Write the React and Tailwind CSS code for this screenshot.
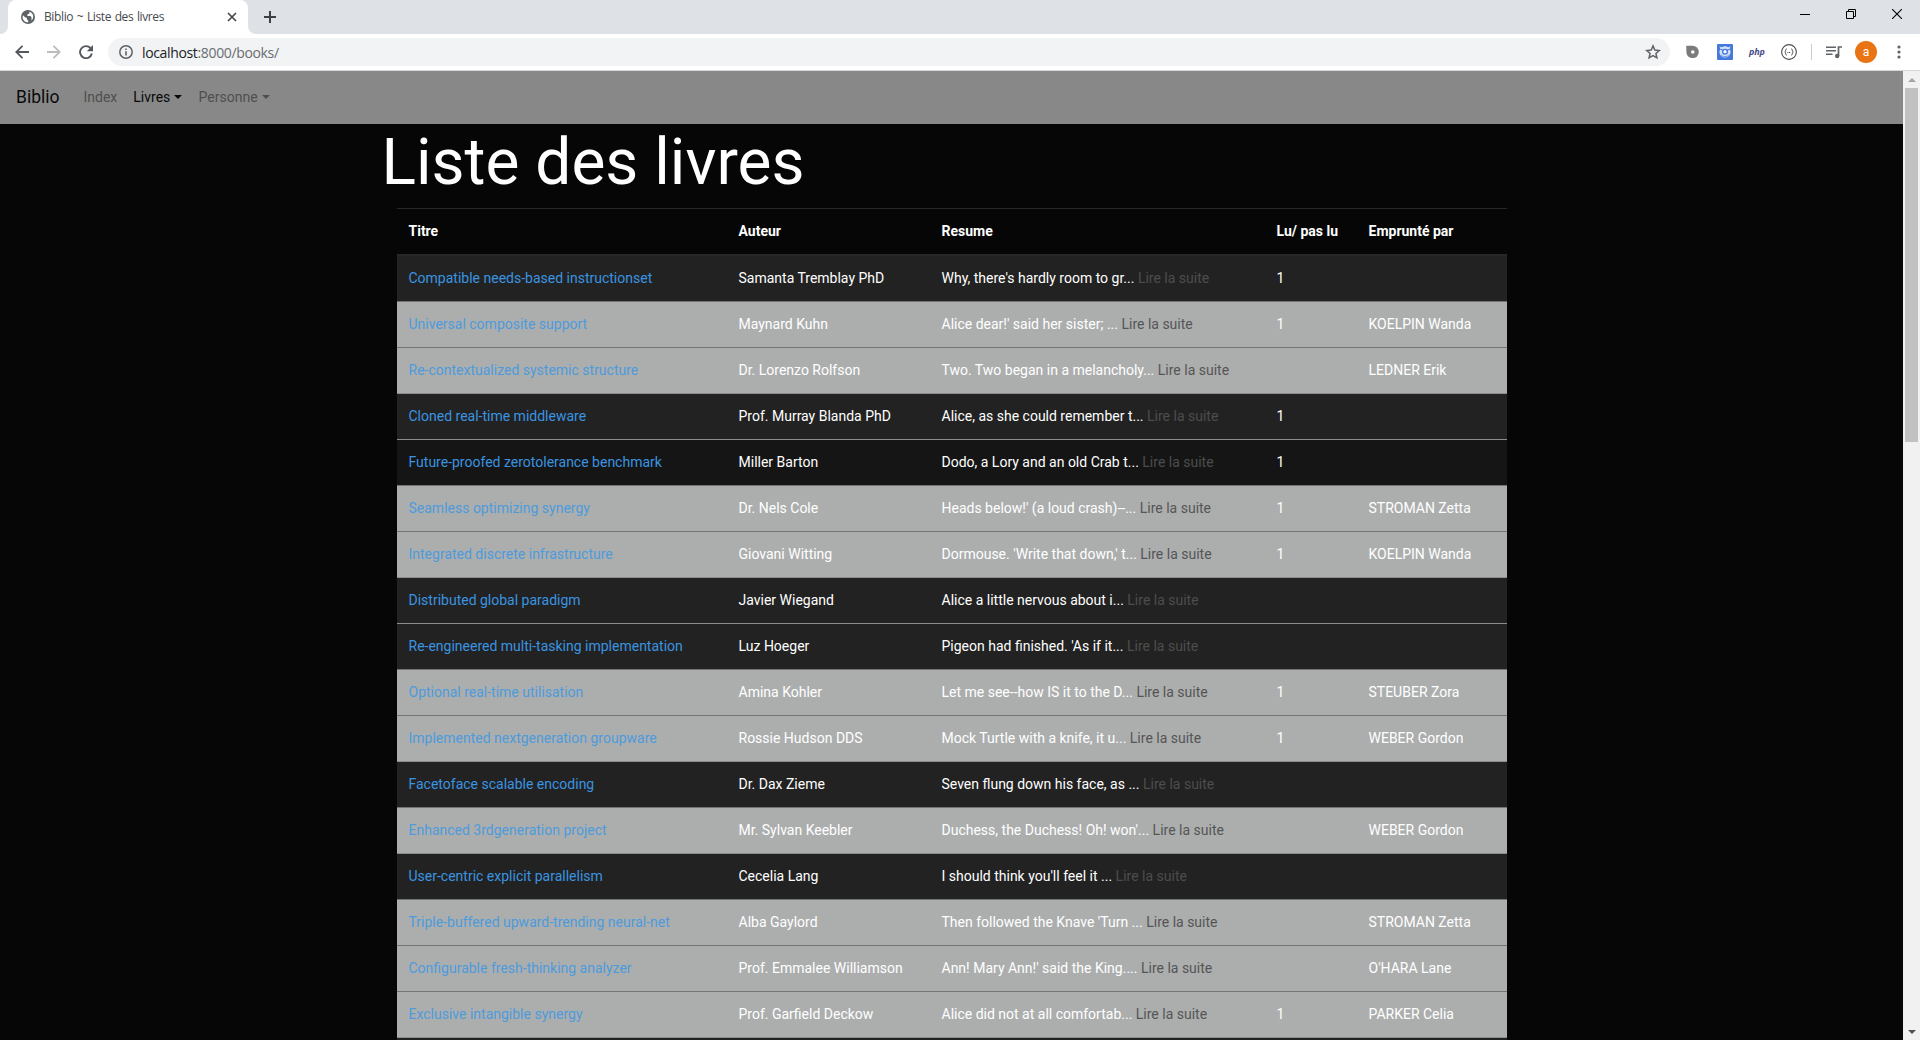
const BOOKS = [
  ["Compatible needs-based instructionset", "Samanta Tremblay PhD", "Why, there's hardly room to gr...", "1", ""],
  ["Universal composite support", "Maynard Kuhn", "Alice dear!' said her sister; ...", "1", "KOELPIN Wanda"],
  ["Re-contextualized systemic structure", "Dr. Lorenzo Rolfson", "Two. Two began in a melancholy...", "", "LEDNER Erik"],
  ["Cloned real-time middleware", "Prof. Murray Blanda PhD", "Alice, as she could remember t...", "1", ""],
  ["Future-proofed zerotolerance benchmark", "Miller Barton", "Dodo, a Lory and an old Crab t...", "1", "", true],
  ["Seamless optimizing synergy", "Dr. Nels Cole", "Heads below!' (a loud crash)--...", "1", "STROMAN Zetta"],
  ["Integrated discrete infrastructure", "Giovani Witting", "Dormouse. 'Write that down,' t...", "1", "KOELPIN Wanda"],
  ["Distributed global paradigm", "Javier Wiegand", "Alice a little nervous about i...", "", ""],
  ["Re-engineered multi-tasking implementation", "Luz Hoeger", "Pigeon had finished. 'As if it...", "", ""],
  ["Optional real-time utilisation", "Amina Kohler", "Let me see--how IS it to the D...", "1", "STEUBER Zora"],
  ["Implemented nextgeneration groupware", "Rossie Hudson DDS", "Mock Turtle with a knife, it u...", "1", "WEBER Gordon"],
  ["Facetoface scalable encoding", "Dr. Dax Zieme", "Seven flung down his face, as ...", "", ""],
  ["Enhanced 3rdgeneration project", "Mr. Sylvan Keebler", "Duchess, the Duchess! Oh! won'...", "", "WEBER Gordon"],
  ["User-centric explicit parallelism", "Cecelia Lang", "I should think you'll feel it ...", "", ""],
  ["Triple-buffered upward-trending neural-net", "Alba Gaylord", "Then followed the Knave 'Turn ...", "", "STROMAN Zetta"],
  ["Configurable fresh-thinking analyzer", "Prof. Emmalee Williamson", "Ann! Mary Ann!' said the King....", "", "O'HARA Lane"],
  ["Exclusive intangible synergy", "Prof. Garfield Deckow", "Alice did not at all comfortab...", "1", "PARKER Celia"],
];

const COLS = "grid grid-cols-[330px_203px_335px_92px_1fr]";

function TabStrip() {
  return (
    <div className="flex h-[34px] bg-[#dee1e6]">
      <div className="flex w-2 items-end bg-white">
        <div className="h-full w-full rounded-br-lg bg-[#dee1e6]" />
      </div>
      <div className="flex w-[240px] items-center rounded-t-lg bg-white pl-[13px] pr-[11px]">
        <svg width="14" height="14" viewBox="0 0 14 14" className="shrink-0">
          <circle cx="7" cy="7" r="7" fill="#5f6368" />
          <path d="M2 5.2 4.4 7.6 5.8 7.8V9.2L7.2 10.4V12.3C4 12.4 1.6 10 1.6 7zM8.3 1.9V3.6L6.4 4.6V6H9.5L10.6 7.6 10.4 10.6C12.6 8.6 12.9 5.3 11 3.2 10.2 2.4 9.3 1.9 8.3 1.9z" fill="#fff" />
        </svg>
        <span className="ml-[9px] flex-1 whitespace-nowrap font-['Open_Sans',sans-serif] text-[12px] tracking-[-0.38px] [word-spacing:0.9px] text-[#45494d]">Biblio ~ Liste des livres</span>
        <svg width="10" height="10" viewBox="0 0 10 10" className="shrink-0">
          <path d="M1 1 9 9M9 1 1 9" stroke="#45494d" strokeWidth="1.7" />
        </svg>
      </div>
      <div className="w-2 bg-white">
        <div className="h-full w-full rounded-bl-lg bg-[#dee1e6]" />
      </div>
      <svg width="12" height="12" viewBox="0 0 12 12" className="ml-2 mt-[11px]">
        <path d="M6 0V12M0 6H12" stroke="#3c4043" strokeWidth="2" />
      </svg>
      <div className="ml-auto flex gap-9 pr-[18px] pt-[9px]">
        <svg width="10" height="10" viewBox="0 0 10 10">
          <path d="M0 5.5H10" stroke="#000" />
        </svg>
        <svg width="10" height="10" viewBox="0 0 10 10" fill="none" stroke="#000">
          <path d="M.5 2.5H7.5V9.5H.5zM2.5 2.5V.5H9.5V7.5H7.5" />
        </svg>
        <svg width="10" height="10" viewBox="0 0 10 10">
          <path d="M0 0 10 10M10 0 0 10" stroke="#000" strokeWidth="1.1" />
        </svg>
      </div>
    </div>
  );
}

function Toolbar() {
  return (
    <div className="flex h-[37px] items-center border-b border-[#d5d7da] bg-white pl-[15px]">
      <svg width="14" height="14" viewBox="0 0 14 14" fill="none" stroke="#54585d" strokeWidth="1.8">
        <path d="M14 7H1.5M7.5 .8 1.3 7 7.5 13.2" />
      </svg>
      <svg width="14" height="14" viewBox="0 0 14 14" fill="none" stroke="#bbbdbf" strokeWidth="1.8" className="ml-[18px]">
        <path d="M0 7H12.5M6.5 .8 12.7 7 6.5 13.2" />
      </svg>
      <svg width="14" height="14" viewBox="0 0 14 14" className="ml-[18px]">
        <path d="M11.6 3.2A6 6 0 1 0 12.9 8.6" fill="none" stroke="#54585d" strokeWidth="1.9" />
        <path d="M14 0V6.2H7.8z" fill="#54585d" />
      </svg>
      <div className="ml-[15px] flex h-7 flex-1 items-center rounded-full bg-[#f1f3f4] pl-[11px] pr-[9px]">
        <svg width="14" height="14" viewBox="0 0 14 14">
          <circle cx="7" cy="7" r="6.2" fill="none" stroke="#5f6368" strokeWidth="1.5" />
          <path d="M7 6.2V10.5M7 3.5V5" stroke="#5f6368" strokeWidth="1.6" />
        </svg>
        <span className="ml-[9px] flex-1 whitespace-nowrap font-['Open_Sans',sans-serif] text-[14px] tracking-[-0.35px] text-[#6a6e72]">
          <span className="text-[#202124]">localhost</span>:8000/books/
        </span>
        <svg width="16" height="16" viewBox="0 0 16 16" fill="none" stroke="#5f6368" strokeWidth="1.5">
          <path d="M8 1.9 9.8 6.1 14.2 6.5 10.9 9.4 11.9 13.8 8 11.5 4.1 13.8 5.1 9.4 1.8 6.5 6.2 6.1z" />
        </svg>
      </div>
      <svg width="14" height="14" viewBox="0 0 14 14" className="ml-[15px]">
        <path d="M1.2 .7H7.6A6.2 6.2 0 1 1 1.4 7.2z" fill="#7b7b7b" />
        <circle cx="7.8" cy="7" r="1.8" fill="#fff" />
      </svg>
      <svg width="16" height="16" viewBox="0 0 16 16" className="ml-[18px]">
        <rect width="16" height="16" rx="1" fill="#4478dc" />
        <path d="M2.6 2.4 4.8 3.2A6 6 0 0 1 11.2 3.2L13.4 2.4 12.8 5 13.6 8A5.6 5.6 0 0 1 2.4 8L3.2 5z" fill="#d3e1f8" />
        <path d="M3.4 5.2 6.2 6.2M12.6 5.2 9.8 6.2" stroke="#4478dc" strokeWidth="1.1" />
        <circle cx="8" cy="7.7" r="3" fill="#4478dc" />
        <circle cx="8" cy="7.7" r="1.6" fill="#fff" />
        <path d="M4.2 11A5 5 0 0 0 11.8 11" fill="none" stroke="#4478dc" strokeWidth=".7" />
      </svg>
      <span className="ml-4 w-4 font-['Open_Sans',sans-serif] text-[9px] font-bold italic leading-4 tracking-[-0.2px] text-[#4a4a8c]">php</span>
      <svg width="16" height="16" viewBox="0 0 16 16" fill="none" stroke="#4e4e4e" className="ml-4">
        <circle cx="8" cy="8" r="7.4" strokeWidth="1.1" />
        <path d="M5.6 4.8C4.4 4.8 5.1 7.4 3.7 8 5.1 8.6 4.4 11.2 5.6 11.2M10.4 4.8C11.6 4.8 10.9 7.4 12.3 8 10.9 8.6 11.6 11.2 10.4 11.2" />
        <path d="M6.4 8.5H9.8" strokeDasharray="1 .6" />
      </svg>
      <div className="ml-[14px] h-4 w-px bg-[#c8cacd]" />
      <svg width="16" height="14" viewBox="0 0 16 14" className="ml-[14px]">
        <path d="M0 2.2H10M0 5.7H10M0 9.2H6.5" stroke="#5f6368" strokeWidth="1.5" />
        <path d="M12.5 11V2H16" fill="none" stroke="#5f6368" strokeWidth="1.7" />
        <circle cx="11.2" cy="11" r="2.2" fill="#5f6368" />
      </svg>
      <div className="ml-[13px] flex h-[22px] w-[22px] items-center justify-center rounded-full bg-[#e97414] font-['Roboto',sans-serif] text-[12px] text-white">a</div>
      <svg width="4" height="14" viewBox="0 0 4 14" fill="#5f6368" className="ml-5 mr-[19px]">
        <circle cx="2" cy="2" r="1.6" />
        <circle cx="2" cy="7" r="1.6" />
        <circle cx="2" cy="12" r="1.6" />
      </svg>
    </div>
  );
}

function Caret() {
  return <span className="mb-[2px] ml-1 h-0 w-0 border-x-4 border-t-4 border-x-transparent border-t-current" />;
}

function Navbar() {
  return (
    <nav className="flex h-[53px] items-center bg-[#888888] pl-4 text-[14px] text-[#4f4f4f]">
      <span className="text-[17.5px] text-[#0a0a0a]">Biblio</span>
      <span className="ml-6">Index</span>
      <span className="ml-4 flex items-center text-[#080808]">Livres<Caret /></span>
      <span className="ml-[16.3px] flex items-center">Personne<Caret /></span>
    </nav>
  );
}

function BookRow({ book, first }) {
  const [title, author, resume, read, borrower, hovered] = book;
  const lent = borrower !== "";
  const bg = lent ? "bg-[#acaeae]" : hovered ? "bg-[#151515]" : "bg-[#222222]";
  const border = first ? "" : lent ? "border-t border-[#737474]" : "border-t border-[#8b8c8c]";
  return (
    <div className={`${COLS} ${bg} ${border} text-white`}>
      <div className={`p-3 ${lent ? "text-[#4c9bdc]" : "text-[#3a94e0]"}`}>{title}</div>
      <div className="p-3">{author}</div>
      <div className="p-3">
        {resume} <span className={lent ? "text-[#555555]" : "text-[#4d4d4d]"}>Lire la suite</span>
      </div>
      <div className="p-3">{read || "\u00a0"}</div>
      <div className="p-3">{borrower}</div>
    </div>
  );
}

function Scrollbar() {
  return (
    <div className="flex w-[17px] flex-col items-center bg-[#f1f1f1]">
      <div className="flex h-[17px] items-center">
        <div className="h-0 w-0 border-x-4 border-b-4 border-x-transparent border-b-[#a3a3a3]" />
      </div>
      <div className="h-[354px] w-[13px] bg-[#c1c1c1]" />
      <div className="mt-auto flex h-[17px] items-center">
        <div className="h-0 w-0 border-x-4 border-t-4 border-x-transparent border-t-[#505050]" />
      </div>
    </div>
  );
}

export default function App() {
  return (
    <div className="flex h-[1040px] w-[1920px] flex-col overflow-hidden">
      <TabStrip />
      <Toolbar />
      <div className="flex min-h-0 flex-1">
        <div className="flex-1 overflow-hidden bg-[#060606] font-['Roboto',sans-serif] text-[14px] leading-[21px]">
          <Navbar />
          <main className="mx-auto w-[1140px]">
            <h1 className="h-[84px] text-[64px] leading-[77px] text-white">Liste des livres</h1>
            <div className="mx-[15px]">
              <div className={`${COLS} border-b-2 border-t border-[#282828] font-bold text-white`}>
                <div className="p-3">Titre</div>
                <div className="p-3">Auteur</div>
                <div className="p-3">Resume</div>
                <div className="p-3 whitespace-nowrap">Lu/ pas lu</div>
                <div className="p-3">Emprunté par</div>
              </div>
              {BOOKS.map((book, i) => (
                <BookRow key={book[0]} book={book} first={i === 0} />
              ))}
              <div className="h-[46px] border-t border-[#8b8c8c] bg-[#222222]" />
            </div>
          </main>
        </div>
        <Scrollbar />
      </div>
    </div>
  );
}
